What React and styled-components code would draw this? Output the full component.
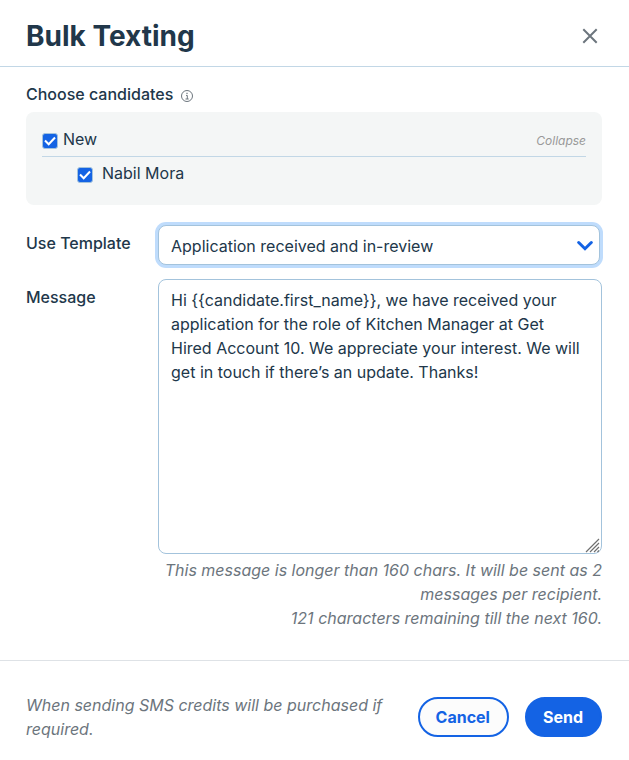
import React, { useState } from 'react';
import styled, { createGlobalStyle } from 'styled-components';

const GlobalStyle = createGlobalStyle`
  * {
    box-sizing: border-box;
  }

  body {
    margin: 0;
    background: #fff;
    color: #21374a;
    font-family: Inter, "Liberation Sans", sans-serif;
    font-size: 16px;
    line-height: 24px;
  }

  button, input, select, textarea {
    margin: 0;
    color: inherit;
    font: inherit;
  }
`;

const Dialog = styled.form`
  width: 100%;
`;

const Header = styled.header`
  display: flex;
  align-items: center;
  justify-content: space-between;
  padding: 19px 22px 13px 26px;
  border-bottom: 1px solid #c2d7e6;
`;

const Title = styled.h1`
  margin: 0;
  font-size: 28px;
  line-height: 34px;
  font-weight: 700;
`;

const CloseButton = styled.button`
  display: flex;
  padding: 5px;
  border: 0;
  background: none;
  color: #6c757d;
  cursor: pointer;
`;

const Body = styled.div`
  padding: 15px 27px 30px 26px;
`;

const SectionTitle = styled.h2`
  display: flex;
  align-items: center;
  gap: 8px;
  margin: 0 0 6px;
  font-size: 16px;
  line-height: 24px;
  font-weight: 500;
`;

const InfoIcon = styled.svg`
  width: 12px;
  height: 12px;
  margin-top: 3px;
  color: #6c757d;
`;

const Candidates = styled.div`
  padding: 15px 16px 20px;
  border-radius: 8px;
  background: #f4f6f6;
`;

const Group = styled.div`
  display: flex;
  align-items: center;
  justify-content: space-between;
  padding-bottom: 5px;
  border-bottom: 1px solid #c2d7e6;
`;

const CheckLabel = styled.label`
  display: flex;
  align-items: center;
  gap: ${(props) => props.$gap}px;
`;

const Member = styled.div`
  padding: 4px 0 0 35px;
`;

const CheckBox = styled.span`
  position: relative;
  display: flex;
  margin-top: 4px;
`;

const CheckInput = styled.input`
  width: 16px;
  height: 16px;
  appearance: none;
  border: 1px solid #a3c3dc;
  border-radius: 3px;
  background: #fff;

  &:checked {
    background: #1463e4;
  }

  &:not(:checked) + svg {
    display: none;
  }
`;

const CheckMark = styled.svg`
  position: absolute;
  inset: 0;
  width: 16px;
  height: 16px;
  pointer-events: none;
`;

const CollapseButton = styled.button`
  padding: 4px 0 0;
  border: 0;
  background: none;
  color: #999;
  font-size: 12px;
  line-height: 18px;
  font-style: italic;
  cursor: pointer;
`;

const Fields = styled.div`
  display: grid;
  grid-template-columns: 120px 1fr;
  column-gap: 12px;
  row-gap: 14px;
  margin-top: 20px;
`;

const FieldLabel = styled.label`
  padding-top: 6px;
  font-weight: 500;
`;

const SelectBox = styled.div`
  position: relative;
  margin-right: 2px;
`;

const Select = styled.select`
  display: block;
  width: 100%;
  height: 40px;
  padding: 2px 36px 0 12px;
  appearance: none;
  border: 1px solid #a3c3dc;
  border-radius: 8px;
  outline: 0;
  background: #fff;
  box-shadow: 0 0 0 3px #bfdcfc;
`;

const SelectArrow = styled.svg`
  position: absolute;
  top: 15px;
  right: 7px;
  width: 16px;
  height: 12px;
  color: #1463e4;
  pointer-events: none;
`;

const MessageBox = styled.div`
  position: relative;
`;

const Message = styled.textarea`
  display: block;
  width: 100%;
  height: 275px;
  padding: 8px 12px;
  border: 1px solid #a3c3dc;
  border-radius: 8px;
  outline: 0;
  resize: vertical;

  &::-webkit-resizer {
    display: none;
  }
`;

const Grip = styled.svg`
  position: absolute;
  right: 2px;
  bottom: 1px;
  width: 15px;
  height: 15px;
  pointer-events: none;
`;

const Hint = styled.p`
  margin: 4px 0 0;
  color: #6c757d;
  font-style: italic;
  text-align: right;
`;

const Footer = styled.footer`
  display: flex;
  align-items: center;
  gap: 16px;
  padding: 32px 27px 19px 26px;
  border-top: 1px solid #dee2e6;
`;

const Note = styled.p`
  flex: 1;
  margin: 0;
  color: #6c757d;
  font-style: italic;
`;

const Button = styled.button`
  height: 40px;
  padding: 0 17px 0 16px;
  border: 2px solid #1463e4;
  border-radius: 20px;
  background: ${(props) => (props.$primary ? '#1463e4' : '#fcfcfc')};
  color: ${(props) => (props.$primary ? '#fff' : '#1463e4')};
  font-weight: 700;
  cursor: pointer;
`;

const messageText = 'Hi {{candidate.first_name}}, we have received your application for the role of Kitchen Manager at Get Hired Account 10. We appreciate your interest. We will get in touch if there’s an update. Thanks!';

function Checkbox({ gap, children }) {
  return (
    <CheckLabel $gap={gap}>
      <CheckBox>
        <CheckInput type="checkbox" defaultChecked />
        <CheckMark viewBox="0 0 16 16" fill="none" stroke="#fff" strokeWidth="2" aria-hidden="true">
          <path d="M3 7.5l3.7 3.8L13 4.5" />
        </CheckMark>
      </CheckBox>
      {children}
    </CheckLabel>
  );
}

export default function App() {
  const [open, setOpen] = useState(true);

  return (
    <Dialog onSubmit={(e) => e.preventDefault()}>
      <GlobalStyle />
      <Header>
        <Title>Bulk Texting</Title>
        <CloseButton type="button" aria-label="Close">
          <svg width="24" height="24" viewBox="0 0 24 24" fill="none" stroke="currentColor" strokeWidth="2" aria-hidden="true">
            <path d="M5.3 5.3l13.4 13.4M18.7 5.3L5.3 18.7" />
          </svg>
        </CloseButton>
      </Header>
      <Body>
        <SectionTitle>
          Choose candidates
          <InfoIcon viewBox="0 0 12 12" fill="none" stroke="currentColor" aria-hidden="true">
            <circle cx="6" cy="6" r="5.5" />
            <path d="M5 5.4h1.3V9M4.5 9h3.2" />
            <path d="M5.4 3.3h1.2" strokeWidth="1.3" />
          </InfoIcon>
        </SectionTitle>
        <Candidates>
          <Group>
            <Checkbox gap={5}>New</Checkbox>
            <CollapseButton type="button" onClick={() => setOpen(!open)}>Collapse</CollapseButton>
          </Group>
          {open && (
            <Member>
              <Checkbox gap={9}>Nabil Mora</Checkbox>
            </Member>
          )}
        </Candidates>
        <Fields>
          <FieldLabel htmlFor="template">Use Template</FieldLabel>
          <SelectBox>
            <Select id="template">
              <option>Application received and in-review</option>
            </Select>
            <SelectArrow viewBox="0 0 16 12" fill="none" stroke="currentColor" strokeWidth="3" strokeLinecap="round" aria-hidden="true">
              <path d="M1.7 2.5L8 8.7l6.3-6.2" />
            </SelectArrow>
          </SelectBox>
          <FieldLabel htmlFor="message">Message</FieldLabel>
          <div>
            <MessageBox>
              <Message id="message" defaultValue={messageText} />
              <Grip viewBox="0 0 15 15" fill="none" stroke="#6f6f6f" strokeWidth="1.2" aria-hidden="true">
                <path d="M1 14L14 1M5 14l9-9M9 14l5-5M12.5 14l1.5-1.5" />
              </Grip>
            </MessageBox>
            <Hint>
              This message is longer than 160 chars. It will be sent as 2 messages per recipient.
              <br />
              121 characters remaining till the next 160.
            </Hint>
          </div>
        </Fields>
      </Body>
      <Footer>
        <Note>When sending SMS credits will be purchased if required.</Note>
        <Button type="button">Cancel</Button>
        <Button type="submit" $primary>Send</Button>
      </Footer>
    </Dialog>
  );
}
